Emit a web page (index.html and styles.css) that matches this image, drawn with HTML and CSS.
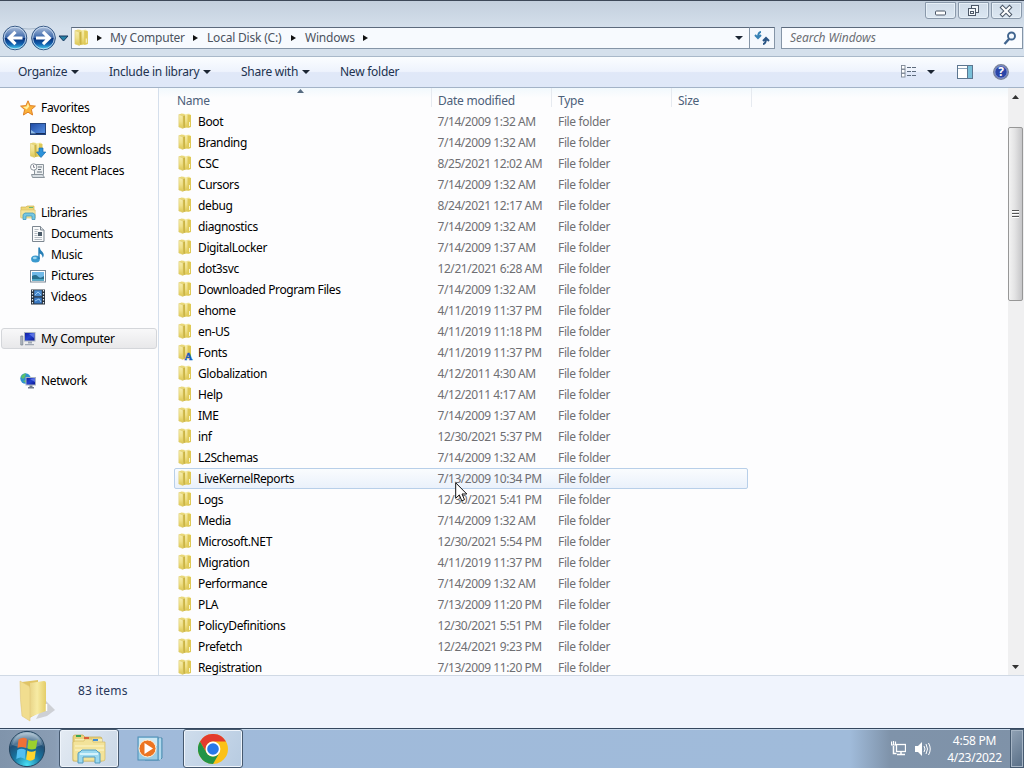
FILE: index.html
```html
<!DOCTYPE html>
<html lang="en">
<head>
<meta charset="utf-8">
<title>Windows</title>
<link rel="stylesheet" href="styles.css">
</head>
<body>
<svg class="defs" width="0" height="0" aria-hidden="true">
  <defs>
    <linearGradient id="gold"><stop offset="0" stop-color="#e9d588"/><stop offset=".45" stop-color="#f7eba4"/><stop offset="1" stop-color="#e4cd68"/></linearGradient>
    <linearGradient id="ball" x2="0" y2="1"><stop offset="0" stop-color="#b3c4dd"/><stop offset=".48" stop-color="#3c68ab"/><stop offset=".5" stop-color="#062e78"/><stop offset=".75" stop-color="#125fae"/><stop offset="1" stop-color="#4fe0fa"/></linearGradient>
    <linearGradient id="screen" x2="1" y2="1"><stop offset="0" stop-color="#101b9d"/><stop offset=".5" stop-color="#2341cf"/><stop offset="1" stop-color="#0a128a"/></linearGradient>
    <linearGradient id="desk" x2="1" y2="1"><stop offset="0" stop-color="#1f4aa5"/><stop offset="1" stop-color="#5b95e5"/></linearGradient>
    <linearGradient id="flap" x2="0" y2="1"><stop offset="0" stop-color="#f6edae"/><stop offset=".5" stop-color="#efe08a"/><stop offset="1" stop-color="#dcc64f"/></linearGradient>
    <radialGradient id="orb" cx=".5" cy=".95" r=".9"><stop offset="0" stop-color="#48e0f5"/><stop offset=".45" stop-color="#17749f"/><stop offset=".75" stop-color="#204f76"/><stop offset="1" stop-color="#9db6c8"/></radialGradient>
    <symbol id="folder" viewBox="0 0 16 16">
      <path d="M2 1.500 4.500 .5 8 1v12.500H2z" fill="#e9d878"/>
      <path d="M7 1.500l5-1 1.500 1V14l-6.500 1z" fill="url(#flap)"/>
      <path d="M10.500 1.500 14 2v12l-3.500 1z" fill="#dfc957"/>
      <path d="M1.800 1.500 6 3v12.500L1.800 14z" fill="url(#flap)" stroke="#ddca70" stroke-width=".5"/>
      <path d="M6.200 3 8 2.200v12L6.200 15.500z" fill="#cbb445"/>
      <path d="M12.500 9v4" stroke="#fbf6cc"/>
    </symbol>
  </defs>
</svg>
<div class="window">
  <header class="frame">
    <div class="caption">
      <span class="cap"><svg width="28" height="15"><rect x="9.500" y="8" width="10" height="4" rx="1" fill="#fff" stroke="#4c5868"/></svg></span>
      <span class="cap"><svg width="28" height="15"><g fill="#f4f8fc" stroke="#4c5868"><rect x="12.500" y="2.500" width="7" height="7"/><rect x="9.500" y="5.500" width="7" height="7"/><rect x="11.500" y="8.500" width="3" height="2"/></g></svg></span>
      <span class="cap"><svg width="28" height="15"><path d="M10.500 4.500l7 7M17.500 4.500l-7 7" stroke="#4c5868" stroke-width="4.200" stroke-linecap="square"/><path d="M10.500 4.500l7 7M17.500 4.500l-7 7" stroke="#fff" stroke-width="2.200" stroke-linecap="square"/></svg></span>
    </div>
    <div class="navbar">
      <svg class="nav" width="70" height="28" viewBox="0 0 70 28">
        <path d="M15 3Q29 7 43 3" stroke="#a9b9ca" fill="none"/>
        <g fill="url(#ball)" stroke="#355783"><circle cx="15" cy="14" r="11.800"/><circle cx="43.500" cy="14" r="11.800"/></g>
        <g fill="none" stroke="#d6e6f8" stroke-width=".8"><circle cx="15" cy="14" r="10.800"/><circle cx="43.500" cy="14" r="10.800"/></g>
        <g fill="none" stroke="#fff" stroke-width="3.200"><path d="M22.500 14H10M15.500 7.800 9.200 14l6.300 6.200"/><path d="M36 14h12.500M43 7.800l6.300 6.200-6.300 6.200"/></g>
        <path d="M59 12h9l-4.500 5z" fill="#2582a8" stroke="#17375e"/>
      </svg>
      <div class="address">
        <svg width="17" height="17"><use href="#folder"/></svg>
        <i class="tri t1"></i><span class="crumb c1">My Computer</span>
        <i class="tri t2"></i><span class="crumb c2">Local Disk (C:)</span>
        <i class="tri t3"></i><span class="crumb c3">Windows</span>
        <i class="tri"></i><i class="down"></i>
      </div>
      <div class="refresh"><svg width="16" height="16" viewBox="0 0 16 16" fill="none" stroke="#3782b5" stroke-width="2"><path d="M7 2Q4 2 4 8M1 5 4 8l3-3"/><path d="M9 14q3 0 3-6M9 11l3-3 3 3" stroke="#2a5585"/></svg></div>
      <div class="search"><span>Search Windows</span><svg width="14" height="14" viewBox="0 0 14 14"><circle cx="8.500" cy="5" r="3.500" fill="#f5faff" stroke="#41658f" stroke-width="1.900"/><path d="M6 8l-4.500 5" stroke="#41658f" stroke-width="2.400"/></svg></div>
    </div>
  </header>
  <nav class="toolbar">
    <span class="cmd k1">Organize<i class="down"></i></span>
    <span class="cmd k2">Include in library<i class="down"></i></span>
    <span class="cmd k3">Share with<i class="down"></i></span>
    <span class="cmd k4">New folder</span>
    <svg class="view" width="16" height="13" viewBox="0 0 16 13"><g fill="#fff" stroke="#7d8795" stroke-width=".9"><rect x=".5" y=".5" width="3.500" height="3.500"/><rect x=".5" y="4.500" width="3.500" height="3.500"/><rect x=".5" y="8.500" width="3.500" height="3.500"/></g><path d="M6 2.500h9M6 6.500h9M6 10.500h9" stroke="#5d6b7d" stroke-dasharray="4 1"/></svg>
    <i class="down view-arrow"></i>
    <svg class="preview" width="16" height="14"><rect x=".5" y=".5" width="15" height="13" fill="#fff" stroke="#5c7690"/><path d="M1 3.500h9" stroke="#8ba2b8"/><rect x="10" y="1" width="5" height="12" fill="#79bfd8"/><path d="M10.500 1v12" stroke="#5c7690"/></svg>
    <svg class="help" width="16" height="16"><circle cx="8" cy="8" r="7.300" fill="#2a45a8" stroke="#7b8496" stroke-width="1.300"/><circle cx="8" cy="8" r="6.200" fill="none" stroke="#c1cae7" stroke-width=".7"/><text x="8" y="12.300" text-anchor="middle" class="q">?</text></svg>
  </nav>
  <main class="body">
    <aside class="tree">
      <div class="node root"><svg viewBox="0 0 16 16"><path d="M8 .8l2.100 4.800 5.300.5-4 3.500 1.200 5.400L8 12.200 3.400 15l1.200-5.400-4-3.500 5.300-.5z" fill="#fbb23a" stroke="#e08228"/><path d="M8 3l1.200 3.600-2.500 3L3 7l3.500-.5z" fill="#fff0a0"/></svg>Favorites</div>
      <div class="node"><svg viewBox="0 0 16 16"><rect x=".5" y="2.500" width="15" height="11" fill="url(#desk)" stroke="#24447c"/><path d="M1 12.500h14" stroke="#152f5d"/><path d="M1 9l5 3.500H1z" fill="#91bde8"/></svg>Desktop</div>
      <div class="node"><svg viewBox="0 0 16 16"><use href="#folder" x="-1.500"/><path d="M9 6h4v4h2.800L11 15.500 6.500 10H9z" fill="#2d93da" stroke="#1a6db0" stroke-width=".7"/></svg>Downloads</div>
      <div class="node"><svg viewBox="0 0 16 16"><path d="M4.500 1.500h9v10h-9z" fill="#edf0f2" stroke="#8b949c"/><path d="M1.500 11.500h11l2 3h-12z" fill="#d7dde2" stroke="#8b949c"/><path d="M8 4h4M8 6.500h3M7 9h5" stroke="#68737d"/><circle cx="3.700" cy="4" r="3.200" fill="#fff" stroke="#8b949c"/><path d="M3.500 2v2.300H5" stroke="#667" fill="none" stroke-width=".8"/></svg>Recent Places</div>
      <div class="node root gap"><svg viewBox="0 0 16 16"><path d="M1 2h5l1-1h7v11H1z" fill="#efd777" stroke="#cdb350" stroke-width=".7"/><path d="M9 2.500h4" stroke="#67b878"/><path d="M.8 5h14.400v8H.8z" fill="#f5e59b" stroke="#d8c06a" stroke-width=".6"/><path d="M3 14.500V9.500L5 8h8l2 1.500v5h-3V11H6v3.500z" fill="#76c7e3" stroke="#4197b9" stroke-width=".8"/></svg>Libraries</div>
      <div class="node"><svg viewBox="0 0 16 16"><path d="M2.500.5h8l3.500 3.500v11.500H2.500z" fill="#fafbfc" stroke="#7d8791"/><path d="M10.500.5V4H14" fill="#dce1e6" stroke="#7d8791"/><path d="M4.500 3.500h4M4.500 5.500h3M4.500 7.500h3M4.500 9.500h3M4.500 11.500h7.500M4.500 13.500h7.500" stroke="#a2abb3" stroke-width=".8"/><rect x="8" y="6" width="4" height="4" fill="#4b5b69"/></svg>Documents</div>
      <div class="node"><svg viewBox="0 0 16 16"><ellipse cx="5.500" cy="12" rx="4.400" ry="3.500" fill="#3999ce"/><path d="M8.300 12V.5h1.500Q10 3 12.500 5q2.500 3 0 6 .5-3-2.800-4.500V12z" fill="#277fb6"/><ellipse cx="4.800" cy="11" rx="2" ry="1.300" fill="#9cd5ef"/></svg>Music</div>
      <div class="node"><svg viewBox="0 0 16 16"><rect x=".5" y="2.500" width="15" height="11.500" fill="#fff" stroke="#7c8996"/><rect x="2" y="4" width="12" height="8.500" fill="#70b9e7"/><path d="M2 8q4-2 6 .5t6-.5v4.500H2z" fill="#286f8d"/><path d="M2 11h12v1.500H2z" fill="#4ba6c4"/></svg>Pictures</div>
      <div class="node"><svg viewBox="0 0 16 16"><rect x="1" y=".5" width="14" height="15" fill="#27303b"/><path d="M2.500 1v14M13.500 1v14" stroke="#e6edf3" stroke-width="1.200" stroke-dasharray="1.500 1.500"/><rect x="4.200" y="1.300" width="7.600" height="6" fill="#4b8cd0"/><rect x="4.200" y="8.500" width="7.600" height="6" fill="#3978c2"/><path d="M5 6l3-3 3 3M5 12l4-2 2 3" stroke="#9dcaf0" fill="none"/></svg>Videos</div>
      <div class="node root gap selected"><svg viewBox="0 0 16 16"><path d="M.8 5h2v9h-2z" fill="#b6bec8" stroke="#737d88" stroke-width=".7"/><rect x="4.500" y="1.500" width="10.500" height="8.500" fill="url(#screen)" stroke="#aab3c0"/><path d="M9 3l5-1v5z" fill="#5971e4"/><path d="M8 10.500h4v2H8zM5 13h9v1.300H5z" fill="#a0a8b4"/></svg>My Computer</div>
      <div class="node root gap"><svg viewBox="0 0 16 16"><circle cx="5.500" cy="5.500" r="5.200" fill="#2e91cf"/><path d="M1 4q2-4 5-3.500L5 4 3 6zM3 8l3-1v3z" fill="#5cc169"/><rect x="6" y="4.500" width="9.500" height="7.500" fill="url(#screen)" stroke="#aab3c0"/><path d="M10 6l5-1v4z" fill="#5971e4"/><path d="M9.500 12.500h3v1.500H14v1.500H8V14h1.500z" fill="#707b8a"/></svg>Network</div>
    </aside>
    <section class="files">
      <div class="head"><span class="name">Name</span><span class="date">Date modified</span><span class="type">Type</span><span class="size">Size</span><svg class="sort" width="7" height="4"><path d="M0 4 3.500 0 7 4z" fill="#566b80"/></svg></div>
      <div class="rows">
        <div class="row"><svg><use href="#folder"/></svg><b>Boot</b><span>7/14/2009 1:32 AM</span><em>File folder</em></div>
        <div class="row"><svg><use href="#folder"/></svg><b>Branding</b><span>7/14/2009 1:32 AM</span><em>File folder</em></div>
        <div class="row"><svg><use href="#folder"/></svg><b>CSC</b><span>8/25/2021 12:02 AM</span><em>File folder</em></div>
        <div class="row"><svg><use href="#folder"/></svg><b>Cursors</b><span>7/14/2009 1:32 AM</span><em>File folder</em></div>
        <div class="row"><svg><use href="#folder"/></svg><b>debug</b><span>8/24/2021 12:17 AM</span><em>File folder</em></div>
        <div class="row"><svg><use href="#folder"/></svg><b>diagnostics</b><span>7/14/2009 1:32 AM</span><em>File folder</em></div>
        <div class="row"><svg><use href="#folder"/></svg><b>DigitalLocker</b><span>7/14/2009 1:37 AM</span><em>File folder</em></div>
        <div class="row"><svg><use href="#folder"/></svg><b>dot3svc</b><span>12/21/2021 6:28 AM</span><em>File folder</em></div>
        <div class="row"><svg><use href="#folder"/></svg><b>Downloaded Program Files</b><span>7/14/2009 1:32 AM</span><em>File folder</em></div>
        <div class="row"><svg><use href="#folder"/></svg><b>ehome</b><span>4/11/2019 11:37 PM</span><em>File folder</em></div>
        <div class="row"><svg><use href="#folder"/></svg><b>en-US</b><span>4/11/2019 11:18 PM</span><em>File folder</em></div>
        <div class="row"><svg><use href="#folder"/><text x="7.500" y="15.500" class="font-a">A</text></svg><b>Fonts</b><span>4/11/2019 11:37 PM</span><em>File folder</em></div>
        <div class="row"><svg><use href="#folder"/></svg><b>Globalization</b><span>4/12/2011 4:30 AM</span><em>File folder</em></div>
        <div class="row"><svg><use href="#folder"/></svg><b>Help</b><span>4/12/2011 4:17 AM</span><em>File folder</em></div>
        <div class="row"><svg><use href="#folder"/></svg><b>IME</b><span>7/14/2009 1:37 AM</span><em>File folder</em></div>
        <div class="row"><svg><use href="#folder"/></svg><b>inf</b><span>12/30/2021 5:37 PM</span><em>File folder</em></div>
        <div class="row"><svg><use href="#folder"/></svg><b>L2Schemas</b><span>7/14/2009 1:32 AM</span><em>File folder</em></div>
        <div class="row hover"><svg><use href="#folder"/></svg><b>LiveKernelReports</b><span>7/13/2009 10:34 PM</span><em>File folder</em></div>
        <div class="row"><svg><use href="#folder"/></svg><b>Logs</b><span>12/30/2021 5:41 PM</span><em>File folder</em></div>
        <div class="row"><svg><use href="#folder"/></svg><b>Media</b><span>7/14/2009 1:32 AM</span><em>File folder</em></div>
        <div class="row"><svg><use href="#folder"/></svg><b>Microsoft.NET</b><span>12/30/2021 5:54 PM</span><em>File folder</em></div>
        <div class="row"><svg><use href="#folder"/></svg><b>Migration</b><span>4/11/2019 11:37 PM</span><em>File folder</em></div>
        <div class="row"><svg><use href="#folder"/></svg><b>Performance</b><span>7/14/2009 1:32 AM</span><em>File folder</em></div>
        <div class="row"><svg><use href="#folder"/></svg><b>PLA</b><span>7/13/2009 11:20 PM</span><em>File folder</em></div>
        <div class="row"><svg><use href="#folder"/></svg><b>PolicyDefinitions</b><span>12/30/2021 5:51 PM</span><em>File folder</em></div>
        <div class="row"><svg><use href="#folder"/></svg><b>Prefetch</b><span>12/24/2021 9:23 PM</span><em>File folder</em></div>
        <div class="row"><svg><use href="#folder"/></svg><b>Registration</b><span>7/13/2009 11:20 PM</span><em>File folder</em></div>
      </div>
    </section>
    <div class="scroll">
      <svg width="7" height="4"><path d="M0 4 3.500 0 7 4z" fill="#333"/></svg>
      <div class="thumb"><i></i><i></i><i></i></div>
      <svg class="bottom" width="7" height="4"><path d="M0 0h7L3.500 4z" fill="#333"/></svg>
    </div>
  </main>
  <footer class="details">
    <svg width="40" height="46" viewBox="0 0 40 46"><path d="M28 22l9 9-8 6-11 3z" fill="#b7b7bb" opacity=".6"/><path d="M4 3l16-2v33L10 40z" fill="#e0c465"/><path d="M12 4l14-2q2 0 2 2v28l-16 6z" fill="url(#gold)"/><path d="M2 2l9 5q1 1 1 3v32l-8-5Q2 22 2 2z" fill="#f1dd8f" stroke="#dfc67a" stroke-width=".6"/><path d="M28.500 25v7" stroke="#fff" stroke-width="1.500"/></svg>
    <span>83 items</span>
  </footer>
  <footer class="taskbar">
    <svg class="start" width="38" height="38" viewBox="0 0 38 38"><circle cx="19" cy="19" r="17.600" fill="url(#orb)" stroke="#23445f"/><path d="M4 15Q7 3 19 3t15 12Q20 21 4 15z" fill="#fff" opacity=".22"/><path d="M10.500 9.500q4.500-3 8.500-.5l-1 9q-4-2-8.500 0z" fill="#ee7137"/><path d="M20.500 9.500q4 2.500 9 0l-1.500 9q-4 2-8.500 0z" fill="#9bd02e"/><path d="M9.300 20q4-2.500 8.500 0l-1 9q-4-3-8.500 0z" fill="#52bff1"/><path d="M19.300 20.500q4 2.500 8.500 0l-1.200 8.500q-4 3-8.500.5z" fill="#ffd52e"/></svg>
    <div class="task"><svg width="36" height="32" viewBox="0 0 36 32"><path d="M2 4q0-2 2-2h8l2 2h15q2 0 2 2v22H2z" fill="#e9d27d" stroke="#c6a94e" stroke-width=".7"/><path d="M4 6h27v20H4z" fill="#f7edb2"/><path d="M4 8h9l1-2h7l1 3h12v17q0 2-2 2H4q-2 0-2-2V9z" fill="#f3e39a" stroke="#d3b962" stroke-width=".7"/><path d="M5 3h5" stroke="#38a655" stroke-width="2"/><path d="M13 5h5" stroke="#db5c37" stroke-width="2"/><path d="M22 7h5" stroke="#428ed5" stroke-width="2"/><path d="M4 13h29M4 17h29" stroke="#fdf7cc"/><path d="M7 30V21q0-2 2-2l2-2h14l2 2q2 0 2 2v9h-5v-6H12v6z" fill="#9bd9f0" stroke="#529bbe"/><path d="M9 21h18" stroke="#e7faff" stroke-width="1.500"/></svg></div>
    <svg class="player" width="28" height="26" viewBox="0 0 28 26"><path d="M8 2h17v20l-2 2H8z" fill="#84bedc" stroke="#508daf"/><path d="M23 2v22" stroke="#dcf3fe"/><rect x="1" y="1" width="20" height="23" fill="#9bcde5" stroke="#4c8eb5"/><path d="M2 2h18v8H2z" fill="#cce8f4"/><circle cx="10.500" cy="12.500" r="8.500" fill="#ec7421" stroke="#fff1da"/><path d="M7.500 7l8.500 5.500L7.500 18z" fill="#fff"/></svg>
    <div class="task chrome"><svg width="30" height="30" viewBox="0 0 30 30"><circle cx="15" cy="15" r="15" fill="#fbc116"/><path d="M2 7.500A15 15 0 0 1 28 7.500H15A7.500 7.500 0 0 0 8.500 18.700z" fill="#e33b2e"/><path d="M2 7.500l6.500 11.200A7.500 7.500 0 0 0 21.500 18.700L15 30A15 15 0 0 1 2 7.500z" fill="#229447"/><circle cx="15" cy="15" r="7.400" fill="#fff"/><circle cx="15" cy="15" r="5.800" fill="#2878e8"/></svg></div>
    <div class="tray">
      <svg width="15" height="15" viewBox="0 0 15 15" fill="none" stroke="#fff"><rect x="5.500" y="3.500" width="9" height="7" stroke-width="1.300"/><path d="M10 11v2.500M6 13.500h8M2.500 5v7.500h3" stroke-width="1.500"/><path d="M.5.500V4h4V.5M2.500 0v4" stroke-width="1.200"/></svg>
      <svg width="16" height="14" viewBox="0 0 16 14"><path d="M0 4h3l4-4v14l-4-4H0z" fill="#fff"/><path d="M9 4q2 3 0 6M11 2q3 5 0 10M13.500 1q3.500 6 0 12" stroke="#fff" fill="none"/></svg>
      <div class="clock"><span>4:58 PM</span><span>4/23/2022</span></div>
      <div class="show"></div>
    </div>
  </footer>
  <svg class="cursor" width="13" height="20" viewBox="0 0 13 20"><path d="M.7.800v15.500l3.600-3.400 2.500 6 2.700-1.200L7 12h4.800z" fill="#fff" stroke="#111"/></svg>
</div>
</body>
</html>
```
FILE: styles.css
```css
* { box-sizing: border-box; }
body { margin: 0; width: 1024px; height: 768px; overflow: hidden; font: 12px/21px "Noto Sans", "Open Sans", sans-serif; letter-spacing: -.3px; color: #000; }
svg { display: block; flex: none; }
.defs { position: absolute; }
.window { position: relative; width: 1024px; height: 768px; display: flex; flex-direction: column; background: #fdfdfe; }
.frame { height: 56px; border-top: 1px solid #3d4858; background: linear-gradient(#c3cfdd, #d5e0ec 50%, #d5e0ec); display: flex; flex-direction: column; }
.caption { height: 18px; display: flex; justify-content: flex-end; gap: 2px; padding: 1px 2px 0 0; }
.cap { width: 31px; height: 17px; border: 1px solid #8a99ab; border-radius: 0 0 3px 3px; background: linear-gradient(#cfdbe8, #dce7f2); box-shadow: inset 0 0 0 1px #e6eff7; }
.navbar { height: 37px; display: flex; align-items: center; }
.nav { margin-top: 1px; }
.address { margin-left: 1px; width: 679px; height: 22px; border: 1px solid #8595a7; border-top-color: #5c6a7c; background: #f7fafe; display: flex; align-items: center; color: #4c535e; letter-spacing: -.2px; }
.address svg { margin-left: 1px; }
.tri { border: 3.500px solid transparent; border-left: 5px solid #111; border-right: 0; }
.down { border: 4px solid transparent; border-top: 4px solid #1b2533; border-bottom: 0; }
.t1 { margin-left: 7px; }
.crumb { white-space: nowrap; }
.c1 { margin-left: 8px; width: 83px; }
.c2 { margin-left: 9px; width: 84px; }
.c3 { margin-left: 9px; width: 58px; }
.address .down { margin: 1px 6px 0 auto; }
.refresh { width: 25px; height: 22px; border: 1px solid #8595a7; border-left: 0; border-top-color: #5c6a7c; background: #f4f8fd; display: flex; align-items: center; justify-content: center; }
.search { margin-left: 6px; width: 242px; height: 22px; border: 1px solid #8595a7; border-top-color: #5c6a7c; background: #fafcff; display: flex; align-items: center; justify-content: space-between; padding: 0 5px 0 8px; color: #6b6e74; font-style: italic; letter-spacing: -.05px; }
.toolbar { height: 32px; border-top: 1px solid #a9b8c9; border-bottom: 1px solid #a3b3c7; background: linear-gradient(#fbfdff, #eef3fd 48%, #e0e8f8 52%, #dfe8f8); display: flex; align-items: center; padding: 0 15px 1px 18px; color: #22324f; letter-spacing: -.25px; }
.cmd { display: flex; align-items: center; justify-content: space-between; white-space: nowrap; }
.k1 { width: 61px; }
.k2 { width: 102px; margin-left: 30px; }
.k3 { width: 69px; margin-left: 30px; }
.k4 { margin-left: 30px; }
.view { margin-left: auto; }
.view-arrow { margin-left: 10px; }
.preview { margin-left: 22px; }
.help { margin-left: 20px; }
.q { font: bold 12px "Open Sans", sans-serif; fill: #fff; }
.body { height: 587px; display: flex; }
.tree { width: 159px; border-right: 1px solid #d5dfec; padding: 9px 1px 0; }
.node { height: 21px; display: flex; align-items: center; gap: 5px; padding-left: 29px; white-space: nowrap; }
.node svg { width: 16px; height: 16px; }
.root { padding-left: 19px; }
.gap { margin-top: 21px; }
.selected { border: 1px solid #d4d6da; border-radius: 3px; background: linear-gradient(#f8f8f9, #e8e8ea); padding-left: 18px; }
.files { width: 849px; overflow: hidden; background: linear-gradient(#f2f9fd, #fdfdfe 10px); }
.head { height: 23px; display: flex; line-height: 25px; color: #4c607a; position: relative; letter-spacing: -.25px; }
.head span { height: 19px; border-right: 1px solid #e6eaf0; padding-left: 6px; }
.head .name { width: 273px; padding-left: 18px; }
.date, .type { width: 120px; }
.size { width: 80px; }
.sort { position: absolute; left: 138px; top: 1px; }
.row { height: 21px; line-height: 15px; margin-left: 15px; width: 574px; display: grid; grid-template-columns: 23px 239.500px 120.500px 1fr; align-items: center; border: 1px solid transparent; border-radius: 2px; color: #6f6f73; white-space: nowrap; }
.row svg { width: 16px; height: 16px; margin: -1px 0 0 2px; }
.row b { font-weight: 400; color: #000; letter-spacing: -.38px; }
.row em { font-style: normal; letter-spacing: -.35px; }
.row span { letter-spacing: -.43px; }
.hover { border-color: #b8cfe9; background: linear-gradient(#fafcfe, #eaf1fb); }
.font-a { font: bold 11px "Liberation Serif", serif; fill: #1459bd; stroke: #1459bd; stroke-width: .4; }
.row svg, .row use { overflow: visible; }
.scroll { width: 16px; background: #f0f0f1; display: flex; flex-direction: column; align-items: center; padding: 7px 1px 6px 0; }
.thumb { margin-top: 28px; width: 15px; height: 174px; border: 1px solid #979797; border-radius: 2px; background: linear-gradient(90deg, #f3f3f3, #e3e3e4 45%, #c6c6c8); display: flex; flex-direction: column; align-items: center; justify-content: center; gap: 1px; }
.thumb i { width: 7px; height: 2px; border-top: 1px solid #555; border-bottom: 1px solid #fff; }
.bottom { margin-top: auto; }
.details { height: 53px; border-top: 1px solid #d0d9e5; background: #f0f4fd; display: flex; padding: 3px 18px; color: #28375a; }
.details span { margin: 1px 0 0 20px; letter-spacing: .2px; }
.taskbar { height: 40px; border-top: 1px solid #35475e; background: linear-gradient(90deg, #8094ab 0, #8a9db4 55px, #a0bada 75px, #a0bbda 850px, #7f93aa 890px, #7f92a8); box-shadow: inset 0 1px #c8d9ec; display: flex; align-items: center; }
.start { margin-left: 8px; }
.task { margin-left: 13px; width: 60px; height: 39px; border: 1px solid #46596f; border-radius: 3px; box-shadow: inset 0 0 0 1px #eef4fb; background: linear-gradient(120deg, #e4ebf3, #c9d7e6); display: flex; align-items: center; justify-content: center; }
.player { margin-left: 18px; }
.chrome { margin-left: 18px; background: linear-gradient(120deg, #cfddec, #b7cbe1); }
.tray { margin-left: auto; display: flex; align-items: center; height: 39px; color: #fff; }
.tray svg { margin-right: 9px; }
.clock { width: 69px; display: flex; flex-direction: column; align-items: center; line-height: 17px; letter-spacing: -.25px; }
.show { margin-left: 1px; width: 14px; height: 39px; border: 1px solid #465a70; box-shadow: inset 0 0 0 1px #a6b5c5; background: linear-gradient(135deg, #91a2b5, #586e86); }
.cursor { position: absolute; left: 455px; top: 482px; }
```
